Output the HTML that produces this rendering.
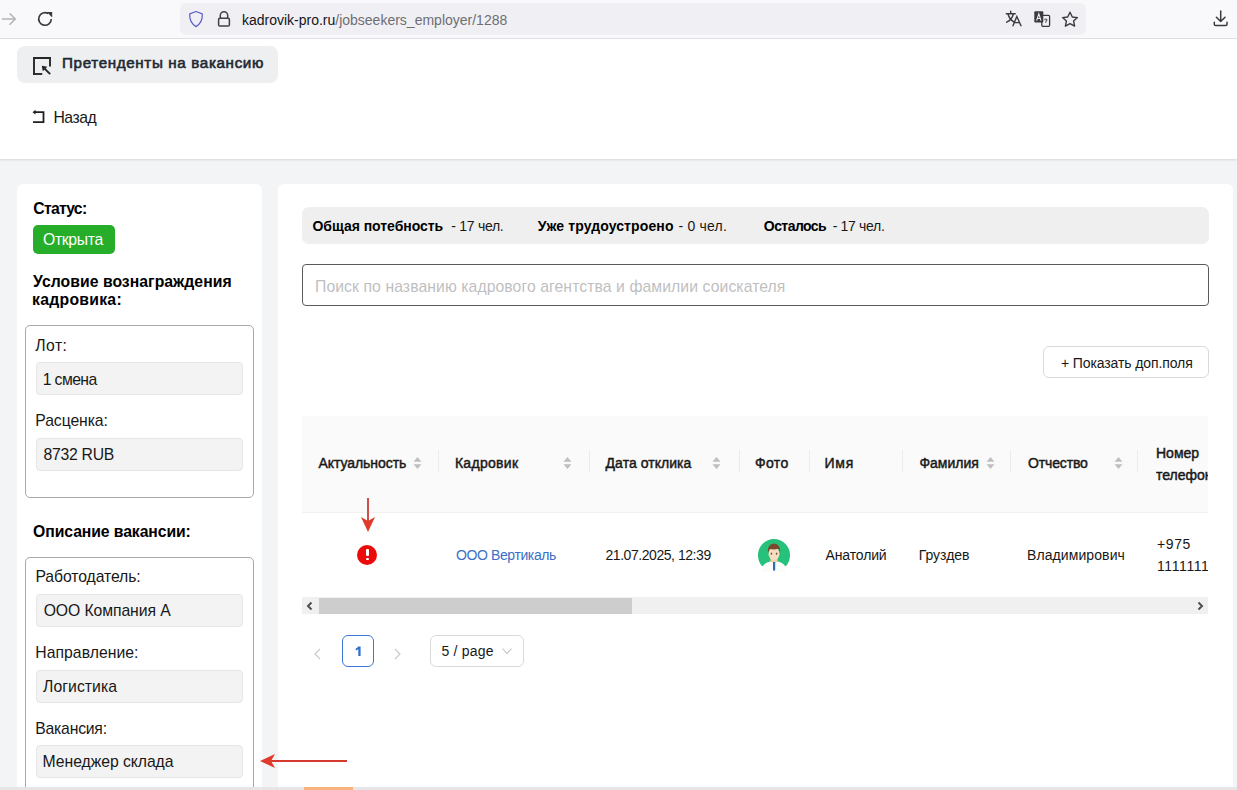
<!DOCTYPE html>
<html><head><meta charset="utf-8">
<style>
*{box-sizing:border-box;margin:0;padding:0}
html,body{width:1237px;height:790px;overflow:hidden;background:#f3f4f6;font-family:"Liberation Sans",sans-serif;color:#1f1f1f;position:relative}
.abs{position:absolute}
.tx{position:absolute;line-height:20px;white-space:nowrap}
.box{position:absolute;border:1px solid #a8a8a8;border-radius:5px;background:#fff}
.fv{position:absolute;background:#f3f3f3;border:1px solid #e6e6e6;border-radius:4px;left:36px;width:207px}
.dv{position:absolute;top:450px;width:1px;height:22px;background:#ececec}
</style></head><body>

<!-- browser toolbar -->
<div class="abs" style="left:0;top:0;width:1237px;height:39px;background:#f9f9fb;border-bottom:1px solid #e0e0e6"></div>
<div class="abs" style="left:180px;top:3px;width:906px;height:32px;background:#f0f0f4;border-radius:6px"></div>
<div class="tx" style="left:241.9px;top:10px;font-size:14px;color:#15141a">kadrovik-pro.ru<span style="color:#6e6e73">/jobseekers_employer/1288</span></div>
<svg class="abs" style="left:0;top:0" width="1237" height="39" viewBox="0 0 1237 39">
  <g fill="none" stroke="#b4b4b8" stroke-width="1.6" stroke-linecap="round" stroke-linejoin="round">
    <path d="M2.5 19 L15 19 M10 13.8 L15.3 19 L10 24.2"/>
  </g>
  <g fill="none" stroke="#3a3a3e" stroke-width="1.6">
    <path d="M48.2 13.5 A6.3 6.3 0 1 0 51.3 19"/>
  </g>
  <path d="M46.8 12 L52.2 12 L52.2 17.4Z" fill="#3a3a3e"/>
  <path d="M196 11.5 L202.3 13.8 Q202.8 22.5 196 26.6 Q189.2 22.5 189.7 13.8Z" fill="none" stroke="#5f5fca" stroke-width="1.25" stroke-linejoin="round"/>
  <g fill="none" stroke="#404045" stroke-width="1.5">
    <path d="M220.3 18.3 L220.3 15.5 A3.7 3.7 0 0 1 227.7 15.5 L227.7 18.3"/>
    <rect x="218.6" y="18.3" width="10.8" height="7.8" rx="1.3"/>
  </g>
  <g fill="none" stroke="#3a3a3e" stroke-width="1.4" stroke-linecap="round">
    <path d="M1006.3 13.8 L1015.2 13.8 M1010.7 11.2 L1010.7 13 M1008.2 14.5 Q1009.5 19.5 1013.8 21.8 M1013.2 14.5 Q1011.8 19.8 1006.6 22.2"/>
    <path d="M1013 25.8 L1016.8 16.5 L1021 25.8 M1014.2 22.6 L1019.6 22.6"/>
  </g>
  <rect x="1041.8" y="15.4" width="7.8" height="10.9" rx="1" fill="#f0f0f4" stroke="#3a3a3e" stroke-width="1.3"/>
  <rect x="1034.3" y="11.3" width="9" height="11.3" rx="1" fill="#3a3a3e"/>
  <path d="M1036.6 20.6 L1038.8 13.8 L1041 20.6 M1037.3 18.5 L1040.3 18.5" fill="none" stroke="#f0f0f4" stroke-width="1.1"/>
  <path d="M1044.5 19.8 Q1045.8 18.3 1047 19.8 L1045.8 21.6 L1045.8 22.8" fill="none" stroke="#555" stroke-width="1.1"/>
  <path d="M1070 12.2 L1072.3 17 L1077.4 17.6 L1073.6 21.1 L1074.6 26.1 L1070 23.6 L1065.4 26.1 L1066.4 21.1 L1062.6 17.6 L1067.7 17Z" fill="none" stroke="#3a3a3e" stroke-width="1.4" stroke-linejoin="round"/>
  <g fill="none" stroke="#3a3a3e" stroke-width="1.5" stroke-linecap="round" stroke-linejoin="round">
    <path d="M1220.7 11 L1220.7 21.5 M1216.4 17.2 L1220.7 21.5 L1225 17.2"/>
    <path d="M1214.3 22.2 L1214.3 24.2 Q1214.3 25.5 1215.6 25.5 L1225.7 25.5 Q1227 25.5 1227 24.2 L1227 22.2"/>
  </g>
</svg>

<!-- page header -->
<div class="abs" style="left:0;top:39px;width:1237px;height:120px;background:#fff;box-shadow:0 1px 2px rgba(0,0,0,.12)"></div>
<div class="abs" style="left:17px;top:46px;width:261px;height:37px;background:#eeeff1;border-radius:8px"></div>
<svg class="abs" style="left:30px;top:54px" width="24" height="24" viewBox="0 0 24 24">
  <path d="M4 20 L4 4 L20 4 L20 11.5" fill="none" stroke="#262626" stroke-width="1.9" stroke-linecap="square"/>
  <path d="M4 20 L11.3 20" fill="none" stroke="#262626" stroke-width="1.9" stroke-linecap="square"/>
  <path d="M13 13 L20.2 20.2" fill="none" stroke="#262626" stroke-width="1.9"/>
  <path d="M11.8 11.8 L17.3 12.8 L12.8 17.3Z" fill="#262626"/>
</svg>
<div class="tx" style="left:62px;top:53px;font-size:15.2px;color:#1e2933;-webkit-text-stroke:0.6px #1e2933;letter-spacing:0.636px">Претенденты на вакансию</div>
<svg class="abs" style="left:30px;top:108px" width="16" height="18" viewBox="0 0 16 18">
  <path d="M3 14.2 L13.5 14.2 L13.5 4.2 L4 4.2" fill="none" stroke="#1f1f1f" stroke-width="1.8"/>
  <path d="M2.5 4.2 L5.5 1.8 L5.5 6.6Z" fill="#1f1f1f"/>
</svg>
<div class="tx" style="left:53.4px;top:108px;font-size:15.75px;color:#181818;letter-spacing:-0.45px">Назад</div>

<!-- left card -->
<div class="abs" style="left:17px;top:184px;width:245px;height:620px;background:#fff;border-radius:6px"></div>
<div class="tx" style="left:33.3px;top:199px;font-size:15.75px;color:#000;font-weight:700;letter-spacing:-0.75px">Статус:</div>
<div class="abs" style="left:33px;top:225px;width:82px;height:29px;background:#26ad2a;border-radius:5px"></div>
<div class="tx" style="left:43px;top:230px;font-size:15.75px;color:#fff;letter-spacing:-0.333px">Открыта</div>
<div class="tx" style="left:33.1px;top:272px;font-size:15.75px;color:#000;font-weight:700;letter-spacing:0.038px">Условие вознаграждения</div>
<div class="tx" style="left:32.1px;top:290px;font-size:15.75px;color:#000;font-weight:700;letter-spacing:0.267px">кадровика:</div>
<div class="box" style="left:25px;top:325px;width:229px;height:173px"></div>
<div class="tx" style="left:35.3px;top:336px;font-size:15.75px;color:#181818;letter-spacing:0.433px">Лот:</div>
<div class="fv" style="top:362px;height:33px"></div>
<div class="tx" style="left:42.7px;top:370px;font-size:15.75px;color:#181818;letter-spacing:-0.6px">1 смена</div>
<div class="tx" style="left:35.3px;top:411px;font-size:15.75px;color:#181818;letter-spacing:-0.088px">Расценка:</div>
<div class="fv" style="top:438px;height:33px"></div>
<div class="tx" style="left:43.6px;top:445px;font-size:15.75px;color:#181818;letter-spacing:-0.286px">8732 RUB</div>
<div class="tx" style="left:33.1px;top:522px;font-size:15.75px;color:#000;font-weight:700;letter-spacing:-0.088px">Описание вакансии:</div>
<div class="box" style="left:25px;top:557px;width:229px;height:260px"></div>
<div class="tx" style="left:35.4px;top:567px;font-size:15.75px;color:#181818;letter-spacing:-0.083px">Работодатель:</div>
<div class="fv" style="top:594px;height:33px"></div>
<div class="tx" style="left:43.7px;top:601px;font-size:15.75px;color:#181818;letter-spacing:-0.085px">ООО Компания А</div>
<div class="tx" style="left:35.3px;top:643px;font-size:15.75px;color:#181818;letter-spacing:0.036px">Направление:</div>
<div class="fv" style="top:670px;height:33px"></div>
<div class="tx" style="left:43px;top:677px;font-size:15.75px;color:#181818;letter-spacing:0.062px">Логистика</div>
<div class="tx" style="left:35.3px;top:719px;font-size:15.75px;color:#181818;letter-spacing:-0.225px">Вакансия:</div>
<div class="fv" style="top:745px;height:33px"></div>
<div class="tx" style="left:42.6px;top:752px;font-size:15.75px;color:#181818;letter-spacing:-0.05px">Менеджер склада</div>

<!-- right card -->
<div class="abs" style="left:278px;top:184px;width:955px;height:620px;background:#fff;border-radius:6px"></div>
<div class="abs" style="left:302px;top:207px;width:907px;height:37px;background:#efefef;border-radius:7px"></div>
<div class="tx" style="left:312.5px;top:216px;font-size:14px;color:#000;font-weight:700;letter-spacing:-0.033px">Общая потебность</div><div class="tx" style="left:451.3px;top:216px;font-size:14px;color:#181818;letter-spacing:-0.287px">- 17 чел.</div><div class="tx" style="left:537.8px;top:216px;font-size:14px;color:#000;font-weight:700;letter-spacing:0.113px">Уже трудоустроено</div><div class="tx" style="left:678.4px;top:216px;font-size:14px;color:#181818;letter-spacing:0.229px">- 0 чел.</div><div class="tx" style="left:763.8px;top:216px;font-size:14px;color:#000;font-weight:700;letter-spacing:-0.557px">Осталось</div><div class="tx" style="left:832.7px;top:216px;font-size:14px;color:#181818;letter-spacing:-0.325px">- 17 чел.</div>
<div class="abs" style="left:302px;top:264px;width:907px;height:42px;border:1px solid #5a5a5a;border-radius:4px;background:#fff"></div>
<div class="tx" style="left:315px;top:277px;font-size:15.75px;color:#bfbfbf;letter-spacing:0.079px">Поиск по названию кадрового агентства и фамилии соискателя</div>
<div class="abs" style="left:1043px;top:346px;width:166px;height:32px;border:1px solid #d9d9d9;border-radius:6px;background:#fff"></div>
<div class="tx" style="left:1061px;top:353px;font-size:14px;color:#181818;letter-spacing:-0.111px">+ Показать доп.поля</div>

<!-- table -->
<div class="abs" style="left:302px;top:416px;width:906px;height:97px;background:#fafafa;border-bottom:1px solid #f0f0f0"></div>
<div class="tx" style="left:318.4px;top:453px;font-size:14px;color:#181818;-webkit-text-stroke:0.45px #181818;letter-spacing:-0.055px">Актуальность</div><div class="tx" style="left:454.9px;top:453px;font-size:14px;color:#181818;-webkit-text-stroke:0.45px #181818;letter-spacing:0.3px">Кадровик</div><div class="tx" style="left:605.6px;top:453px;font-size:14px;color:#181818;-webkit-text-stroke:0.45px #181818;letter-spacing:0.036px">Дата отклика</div><div class="tx" style="left:755px;top:453px;font-size:14px;color:#181818;-webkit-text-stroke:0.45px #181818;letter-spacing:0.333px">Фото</div><div class="tx" style="left:824.4px;top:453px;font-size:14px;color:#181818;-webkit-text-stroke:0.45px #181818;letter-spacing:0.8px">Имя</div><div class="tx" style="left:919.4px;top:453px;font-size:14px;color:#181818;-webkit-text-stroke:0.45px #181818">Фамилия</div><div class="tx" style="left:1028px;top:453px;font-size:14px;color:#181818;-webkit-text-stroke:0.45px #181818;letter-spacing:-0.143px">Отчество</div>
<div class="tx" style="left:1156px;top:442px;line-height:22px;width:52px;overflow:hidden;font-size:14px;-webkit-text-stroke:0.45px #181818;color:#181818">Номер<br>телефона</div>
<svg class="abs" style="left:413px;top:456px" width="9" height="14" viewBox="0 0 9 14"><path d="M4.5 1 L8.5 5.8 L0.5 5.8Z M4.5 13 L8.5 8.2 L0.5 8.2Z" fill="#bfbfbf"/></svg>
<svg class="abs" style="left:563px;top:456px" width="9" height="14" viewBox="0 0 9 14"><path d="M4.5 1 L8.5 5.8 L0.5 5.8Z M4.5 13 L8.5 8.2 L0.5 8.2Z" fill="#bfbfbf"/></svg>
<svg class="abs" style="left:712px;top:456px" width="9" height="14" viewBox="0 0 9 14"><path d="M4.5 1 L8.5 5.8 L0.5 5.8Z M4.5 13 L8.5 8.2 L0.5 8.2Z" fill="#bfbfbf"/></svg>
<svg class="abs" style="left:986px;top:456px" width="9" height="14" viewBox="0 0 9 14"><path d="M4.5 1 L8.5 5.8 L0.5 5.8Z M4.5 13 L8.5 8.2 L0.5 8.2Z" fill="#bfbfbf"/></svg>
<svg class="abs" style="left:1114px;top:456px" width="9" height="14" viewBox="0 0 9 14"><path d="M4.5 1 L8.5 5.8 L0.5 5.8Z M4.5 13 L8.5 8.2 L0.5 8.2Z" fill="#bfbfbf"/></svg>
<div class="dv" style="left:438px"></div>
<div class="dv" style="left:589px"></div>
<div class="dv" style="left:739px"></div>
<div class="dv" style="left:809px"></div>
<div class="dv" style="left:902px"></div>
<div class="dv" style="left:1010px"></div>
<div class="dv" style="left:1137px"></div>

<!-- row -->
<div class="abs" style="left:357px;top:545px;width:20px;height:20px;border-radius:50%;background:#ec0a0a"></div>
<div class="abs" style="left:365.6px;top:548.5px;width:3px;height:7.5px;background:#fff;border-radius:1px"></div>
<div class="abs" style="left:365.6px;top:557.8px;width:3px;height:2.6px;background:#fff;border-radius:1px"></div>
<div class="tx" style="left:456px;top:545px;font-size:14px;color:#3a6fc6;letter-spacing:-0.392px">ООО Вертикаль</div><div class="tx" style="left:605.5px;top:545px;font-size:14px;color:#181818;letter-spacing:-0.45px">21.07.2025, 12:39</div>
<svg class="abs" style="left:757px;top:538px" width="34" height="34" viewBox="0 0 34 34">
  <path d="M1 17 A16 16 0 1 1 33 17 A16 16 0 0 1 29 28 L5 28 A16 16 0 0 1 1 17Z" fill="#26c27c"/>
  <path d="M6 34 L6 28 Q8 24.5 13 23.5 L21 23.5 Q26 24.5 28 28 L28 34Z" fill="#fbfbfb"/>
  <path d="M13.5 19 L20.5 19 L20.5 23.8 Q17 25.5 13.5 23.8Z" fill="#f0cfae"/>
  <rect x="16" y="24" width="2.2" height="8.5" fill="#2a6db5"/>
  <ellipse cx="17" cy="15.8" rx="5.5" ry="6.3" fill="#f7dcc0"/>
  <path d="M10.8 15.5 Q10 6 17 5.5 Q24 6 23.2 15.5 Q22.6 11.5 21 10.8 Q17 12 13 11 Q11.6 12.5 10.8 15.5Z" fill="#7b4a2e"/>
  <rect x="13.8" y="14.8" width="1.3" height="1.7" fill="#5a3a2a"/>
  <rect x="18.9" y="14.8" width="1.3" height="1.7" fill="#5a3a2a"/>
</svg>
<div class="tx" style="left:825.5px;top:545px;font-size:14px;color:#181818;letter-spacing:-0.129px">Анатолий</div><div class="tx" style="left:918.8px;top:545px;font-size:14px;color:#181818;letter-spacing:-0.05px">Груздев</div><div class="tx" style="left:1027px;top:545px;font-size:14px;color:#181818;letter-spacing:0.091px">Владимирович</div>
<div class="tx" style="left:1157px;top:533px;line-height:22px;width:51px;overflow:hidden;font-size:14px;color:#181818;letter-spacing:0.6px">+975<br>1111111</div>

<!-- scrollbar -->
<div class="abs" style="left:302px;top:597px;width:906px;height:17px;background:#f0f0f0"></div>
<div class="abs" style="left:319px;top:598px;width:313px;height:16px;background:#cdcdcd"></div>
<svg class="abs" style="left:304px;top:600px" width="12" height="12" viewBox="0 0 12 12"><path d="M7.5 2.5 L4 6 L7.5 9.5" fill="none" stroke="#505050" stroke-width="2"/></svg>
<svg class="abs" style="left:1194px;top:600px" width="12" height="12" viewBox="0 0 12 12"><path d="M4.5 2.5 L8 6 L4.5 9.5" fill="none" stroke="#505050" stroke-width="2"/></svg>

<!-- pagination -->
<svg class="abs" style="left:311px;top:647px" width="12" height="14" viewBox="0 0 12 14"><path d="M9 2 L4 7 L9 12" fill="none" stroke="#c8c8c8" stroke-width="1.1"/></svg>
<div class="abs" style="left:342px;top:635px;width:32px;height:32px;border:1px solid #3b78d8;border-radius:6px;background:#fff"></div>
<svg class="abs" style="left:354px;top:645px" width="8" height="12" viewBox="0 0 8 12"><path d="M4.3 1.5 L6.6 1.5 L6.6 11 L4.3 11 L4.3 4.2 Q3 5.2 1.8 5.6 L1.8 3.6 Q3.3 2.8 4.3 1.5Z" fill="#2f6fd0"/></svg>
<svg class="abs" style="left:392px;top:647px" width="12" height="14" viewBox="0 0 12 14"><path d="M3 2 L8 7 L3 12" fill="none" stroke="#c8c8c8" stroke-width="1.1"/></svg>
<div class="abs" style="left:430px;top:635px;width:94px;height:32px;border:1px solid #d9d9d9;border-radius:6px;background:#fff"></div>
<div class="tx" style="left:441.5px;top:641px;font-size:14px;color:#181818;letter-spacing:0.214px">5 / page</div>
<svg class="abs" style="left:501px;top:646px" width="12" height="10" viewBox="0 0 12 10"><path d="M1.5 2.5 L6 7.5 L10.5 2.5" fill="none" stroke="#c0c0c0" stroke-width="1.1"/></svg>

<!-- annotations -->
<svg class="abs" style="left:0;top:0" width="1237" height="790">
  <line x1="368" y1="498" x2="368" y2="522" stroke="#c83c34" stroke-width="1.8"/>
  <path d="M361 517 L368 532 L375 517 L368 521Z" fill="#e03a2a"/>
  <line x1="270" y1="761" x2="347" y2="761" stroke="#d63a2e" stroke-width="2.2"/>
  <path d="M260 761 L275 754 L271 761 L275 768Z" fill="#e03a2a"/>
</svg>

<!-- bottom bar -->
<div class="abs" style="left:0;top:786.5px;width:1237px;height:4px;background:#e6e6e8"></div>
<div class="abs" style="left:304px;top:786.5px;width:49px;height:4px;background:#f8b37c"></div>

</body></html>
